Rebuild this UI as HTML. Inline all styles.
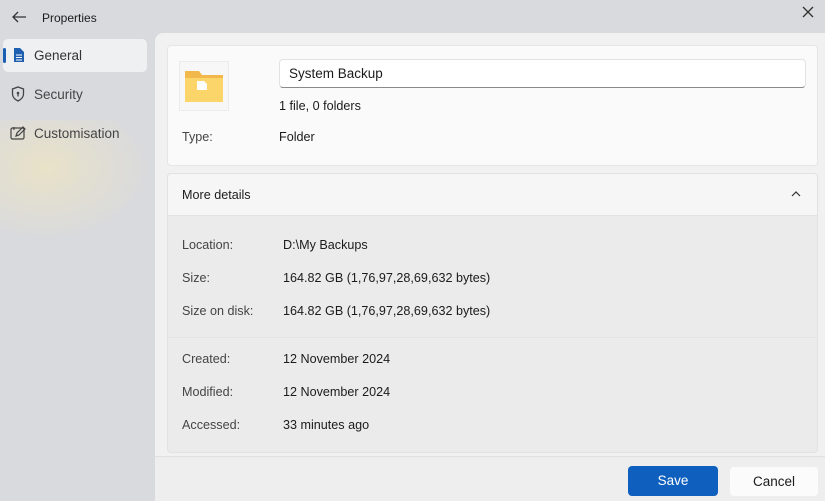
<!DOCTYPE html>
<html><head><style>
*{margin:0;padding:0;box-sizing:border-box}
body{width:825px;height:501px;overflow:hidden;background:#d9dadd;font-family:"Liberation Sans",sans-serif;color:#1b1b1b;position:relative}
.a{position:absolute}
.t{font-size:12.6px;white-space:nowrap}
.l{left:182px;color:#444}
.v{left:283px}
</style></head><body>
<div class="a" style="left:0;top:120px;width:150px;height:120px;background:radial-gradient(ellipse at 30% 40%,#e9e2c8 0%,rgba(217,218,221,0) 70%)"></div>
<svg class="a" style="left:11px;top:10px" width="16" height="14" viewBox="0 0 16 14"><path d="M15 7H2M7 2L2 7l5 5" fill="none" stroke="#333" stroke-width="1.3"/></svg>
<div class="a" style="left:42px;top:11px;font-size:12px">Properties</div>
<svg class="a" style="left:802px;top:6px" width="12" height="12" viewBox="0 0 12 12"><path d="M1 1l10 10M11 1L1 11" stroke="#333" stroke-width="1.3"/></svg>
<div class="a" style="left:3px;top:39px;width:144px;height:33px;background:#eef0f2;border-radius:5px"></div>
<div class="a" style="left:3px;top:48px;width:3px;height:15px;background:#1a5fb4;border-radius:2px"></div>
<svg class="a" style="left:13px;top:47px" width="12" height="16" viewBox="0 0 12 16"><path d="M1 1h6l4 4v10H1z" fill="#1f5fb0"/><path d="M3 8h6M3 10.5h6M3 13h6" stroke="#fff" stroke-width="1"/></svg>
<div class="a t" style="left:34px;top:48px;font-size:13.5px;color:#333">General</div>
<svg class="a" style="left:11px;top:86px" width="14" height="16" viewBox="0 0 14 16"><path d="M7 1l5.5 2v5c0 3.5-2.5 5.5-5.5 7-3-1.5-5.5-3.5-5.5-7V3z" fill="none" stroke="#444" stroke-width="1.3"/><circle cx="7" cy="7" r="1.3" fill="#444"/><path d="M7 8v2.5" stroke="#444" stroke-width="1.3"/></svg>
<div class="a t" style="left:34px;top:87px;font-size:13.5px;color:#444">Security</div>
<svg class="a" style="left:10px;top:125px" width="16" height="15" viewBox="0 0 16 15"><rect x="1" y="3" width="13" height="11" rx="1.5" fill="none" stroke="#444" stroke-width="1.2"/><path d="M4 2v3M6 11l1-3 6-6 2 2-6 6z" fill="none" stroke="#444" stroke-width="1.2"/></svg>
<div class="a t" style="left:34px;top:126px;font-size:13.5px;color:#444">Customisation</div>

<div class="a" style="left:155px;top:33px;width:670px;height:468px;background:#f1f1f1;border-top-left-radius:8px"></div>
<div class="a" style="left:167px;top:45px;width:651px;height:121px;background:#fafafa;border:1px solid #e6e6e6;border-radius:4px"></div>
<div class="a" style="left:179px;top:61px;width:50px;height:50px;background:#f7f7f7;border:1px solid #ececec"></div>
<svg class="a" style="left:185px;top:68px" width="40" height="36" viewBox="0 0 40 36"><path d="M0 3h14l3 4h21v27H0z" fill="#f2b84b"/><path d="M0 10h38v24H0z" fill="#fbd46a"/><path d="M12 13h7l3 3v6H12z" fill="#fdfdfd"/></svg>
<div class="a" style="left:279px;top:59px;width:527px;height:29px;background:#fff;border:1px solid #e2e2e2;border-bottom:1px solid #8a8a8a;border-radius:4px"></div>
<div class="a t" style="left:289px;top:66px;font-size:13.5px">System Backup</div>
<div class="a t" style="left:279px;top:99px">1 file, 0 folders</div>
<div class="a t l" style="top:130px">Type:</div>
<div class="a t v" style="left:279px;top:130px">Folder</div>

<div class="a" style="left:167px;top:173px;width:651px;height:280px;background:#ebebeb;border:1px solid #e2e2e2;border-radius:4px"></div>
<div class="a" style="left:167px;top:173px;width:651px;height:43px;background:#f6f6f6;border:1px solid #e2e2e2;border-radius:4px 4px 0 0"></div>
<div class="a t" style="left:182px;top:188px">More details</div>
<svg class="a" style="left:791px;top:191px" width="10" height="6" viewBox="0 0 10 6"><path d="M1 5l4-4 4 4" fill="none" stroke="#333" stroke-width="1.2"/></svg>
<div class="a t l" style="top:238px">Location:</div><div class="a t v" style="top:238px">D:\My Backups</div>
<div class="a t l" style="top:271px">Size:</div><div class="a t v" style="top:271px">164.82 GB (1,76,97,28,69,632 bytes)</div>
<div class="a t l" style="top:304px">Size on disk:</div><div class="a t v" style="top:304px">164.82 GB (1,76,97,28,69,632 bytes)</div>
<div class="a" style="left:168px;top:337px;width:649px;height:1px;background:#e4e4e4"></div>
<div class="a t l" style="top:352px">Created:</div><div class="a t v" style="top:352px">12 November 2024</div>
<div class="a t l" style="top:385px">Modified:</div><div class="a t v" style="top:385px">12 November 2024</div>
<div class="a t l" style="top:418px">Accessed:</div><div class="a t v" style="top:418px">33 minutes ago</div>

<div class="a" style="left:155px;top:456px;width:670px;height:45px;background:#eeeeee;border-top:1px solid #e0e0e0"></div>
<div class="a" style="left:628px;top:466px;width:90px;height:30px;background:#0f5fbf;border-radius:4px;color:#fff;font-size:13.5px;text-align:center;line-height:30px">Save</div>
<div class="a" style="left:730px;top:467px;width:88px;height:29px;background:#fbfbfb;border-radius:4px;font-size:13.5px;text-align:center;line-height:29px">Cancel</div>
</body></html>
